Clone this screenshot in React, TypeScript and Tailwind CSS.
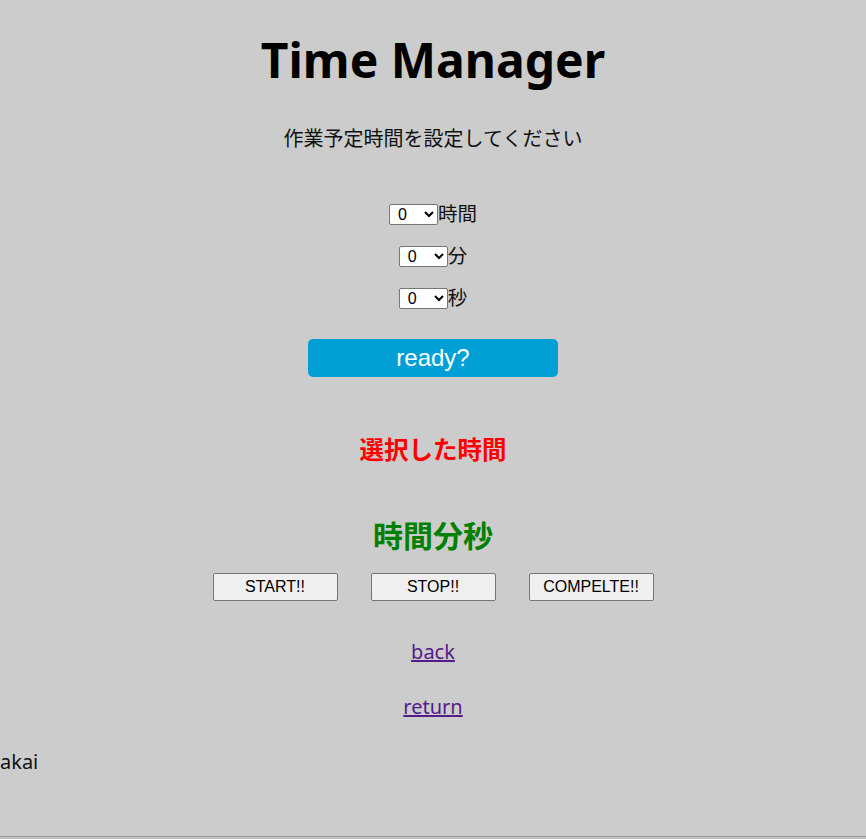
import { useState } from "react";

const jp = "font-['Noto_Sans','Noto_Sans_CJK_JP',sans-serif]";

function TimeSelect({ label, options }: { label: string; options: number }) {
	const [value, setValue] = useState("0");
	return (
		<div className="flex items-center h-[28px]">
			<select
				value={value}
				onChange={(e) => setValue(e.target.value)}
				className="h-[21px] w-[49px] bg-white border border-[#767676] rounded-[2px] text-[16px] leading-[19px] text-black pl-[4px] font-['Liberation_Sans',sans-serif]"
			>
				{Array.from({ length: options }, (_, i) => (
					<option key={i} value={String(i)}>
						{i}
					</option>
				))}
			</select>
			<span className="text-[19.5px] leading-[28px] text-[#111]">{label}</span>
		</div>
	);
}

export default function App() {
	return (
		<div className={`h-[839px] bg-[#cccccc] flex flex-col overflow-hidden ${jp}`}>
			<div className="flex flex-col items-center">
				{/* title */}
				<h1 className="mt-[31px] text-[48px] leading-[58px] font-bold text-black">
					Time Manager
				</h1>
				<p className="mt-[36px] text-[20px] leading-[28px] text-[#111]">
					作業予定時間を設定してください
				</p>

				{/* selects */}
				<div className="mt-[47px] flex flex-col items-center gap-[14px]">
					<TimeSelect label="時間" options={24} />
					<TimeSelect label="分" options={60} />
					<TimeSelect label="秒" options={60} />
				</div>

				<button className="mt-[27px] w-[250px] h-[38px] bg-[#009fd6] rounded-[5px] text-white text-[24px] font-['Liberation_Sans',sans-serif]">
					ready?
				</button>

				<h3 className="mt-[57px] text-[24.5px] leading-[32px] font-bold text-[#ff0000]">
					選択した時間
				</h3>
				<h2 className="mt-[50px] text-[30px] leading-[40px] font-bold text-[#008000]">
					時間分秒
				</h2>

				{/* controls */}
				<div className="mt-[17px] flex gap-[33px]">
					{["START!!", "STOP!!", "COMPELTE!!"].map((t) => (
						<button
							key={t}
							className="w-[125px] h-[28px] bg-[#efefef] border border-[#767676] rounded-[2px] text-[16px] text-black font-['Liberation_Sans',sans-serif]"
						>
							{t}
						</button>
					))}
				</div>

				<a href="#" className="mt-[37px] text-[20px] leading-[28px] text-[#551a8b] underline">
					back
				</a>
				<a href="#" className="mt-[27px] text-[20px] leading-[28px] text-[#551a8b] underline">
					return
				</a>
			</div>

			<p className="mt-[27px] text-[20px] leading-[28px] text-[#111]">akai</p>

			<div className="mt-auto h-[3px] border-t border-[#9a9a9a] bg-[#c4c4c4]" />
		</div>
	);
}
